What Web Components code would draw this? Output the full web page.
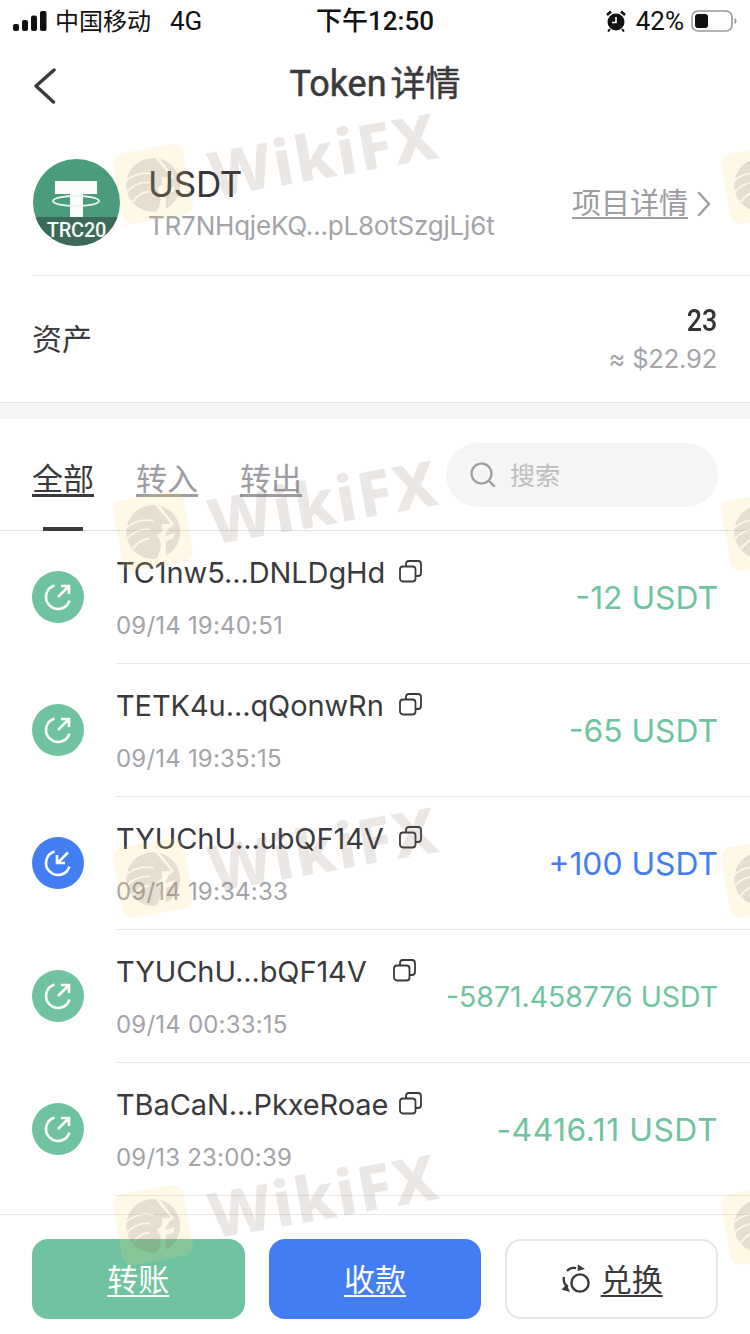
<!DOCTYPE html>
<html lang="zh"><head><meta charset="utf-8"><title>Token详情</title>
<style>html,body{margin:0;padding:0;background:#fff}body{font-family:Inter,"Noto Sans CJK SC",sans-serif}</style></head>
<body>
<app-screen>
  <status-bar></status-bar>
  <nav-bar><span>Token</span><span>详情</span></nav-bar>
  <token-head name="USDT" address="TR7NHqjeKQ...pL8otSzgjLj6t" link="项目详情"></token-head>
  <asset-row label="资产" amount="23" value="≈ $22.92"></asset-row>
  <tab-bar></tab-bar>
  <tx-list>
    <tx-row kind="out" name="TC1nw5...DNLDgHd" time="09/14 19:40:51" amount="-12 USDT"></tx-row>
    <tx-row kind="out" name="TETK4u...qQonwRn" time="09/14 19:35:15" amount="-65 USDT"></tx-row>
    <tx-row kind="in" name="TYUChU...ubQF14V" time="09/14 19:34:33" amount="+100 USDT"></tx-row>
    <tx-row kind="out" name="TYUChU...bQF14V" time="09/14 00:33:15" amount="-5871.458776 USDT" namew="264" size="28.4"></tx-row>
    <tx-row kind="out" name="TBaCaN...PkxeRoae" time="09/13 23:00:39" amount="-4416.11 USDT" spacing=".55"></tx-row>
  </tx-list>
  <action-bar></action-bar>
  <wiki-mark></wiki-mark>
</app-screen>
<script>
const CJK='"Noto Sans CJK SC"';
class Base extends HTMLElement{
  constructor(){super();this.attachShadow({mode:'open'});}
  connectedCallback(){this.shadowRoot.innerHTML=this.view();}
  a(n){return this.getAttribute(n)||'';}
}
customElements.define('app-screen',class extends Base{
  view(){return `<style>:host{display:flex;flex-direction:column;position:relative;width:750px;height:1334px;overflow:hidden;background:#fff;color:#3a3a3c;font-family:Inter,${CJK},sans-serif}</style><slot></slot>`;}
});
customElements.define('status-bar',class extends Base{
  view(){return `<style>
  :host{display:flex;align-items:center;height:42px;padding:0 13px;box-sizing:border-box;color:#111;font-family:Roboto,${CJK},sans-serif;font-size:24px}
  .sig{margin-right:8px;display:block}.car{line-height:34px;margin-top:2px}.net{margin-left:19px;font-size:26px;line-height:34px;margin-top:-1px}
  .time{position:absolute;left:316px;top:4px;font-size:26px;font-weight:500;line-height:34px}
  .r{margin-left:auto;display:flex;align-items:center}.pct{margin:0 7px 0 10px;font-size:26px}
  </style>
  <svg class="sig" width="34" height="22" viewBox="0 0 34 22"><rect x="0" y="14" width="6" height="7" rx="2" fill="#111"/><rect x="9" y="10" width="6" height="11" rx="2" fill="#111"/><rect x="18" y="5.5" width="6" height="15.5" rx="2" fill="#111"/><rect x="27" y="1" width="6.5" height="20" rx="2" fill="#111"/></svg>
  <span class="car">中国移动</span><span class="net">4G</span>
  <span class="time">下午12:50</span>
  <span class="r">
   <svg width="20" height="22" viewBox="0 0 20 22"><circle cx="10" cy="12" r="8.5" fill="#111"/><path d="M10 7v5.5H6" stroke="#fff" stroke-width="1.6" fill="none"/><path d="M1 5l4-3.5M19 5l-4-3.5" stroke="#111" stroke-width="2.6"/><path d="M4 19l-2 2.5M16 19l2 2.5" stroke="#111" stroke-width="2"/></svg>
   <span class="pct">42%</span>
   <svg width="46" height="24" viewBox="0 0 46 24"><rect x="1" y="2" width="40" height="20" rx="6" fill="none" stroke="#999" stroke-width="1.6"/><rect x="4" y="5" width="13" height="14" rx="3" fill="#111"/><path d="M43.5 9v6c1.400-.5 2-1.700 2-3s-.6-2.500-2-3z" fill="#999"/></svg>
  </span>`;}
});
customElements.define('nav-bar',class extends Base{
  view(){return `<style>
  :host{display:flex;align-items:center;justify-content:center;position:relative;height:84px;padding-bottom:8px;box-sizing:border-box;font-size:36px;font-weight:400;color:#3a3a3c;font-family:Roboto,${CJK},sans-serif;-webkit-text-stroke:.5px #3a3a3c}
  .t{display:block;white-space:nowrap}
  ::slotted(span:last-child){font-size:35px;margin-left:4px}
  svg{position:absolute;left:32px;top:26px}
  </style><svg width="26" height="36" viewBox="0 0 26 36"><path d="M22 2L4 18l17.500 16" fill="none" stroke="#3a3a3c" stroke-width="3.4" stroke-linecap="round" stroke-linejoin="round" /></svg><div class="t"><slot></slot></div>`;}
});
customElements.define('token-logo',class extends Base{
  view(){return `<style>
  :host{display:block;position:relative;width:87px;height:87px;border-radius:50%;overflow:hidden;background:#4a9c7c;flex:none}
  svg{display:block}.band{position:absolute;left:0;right:0;bottom:0;height:29px;background:#3c6a5a;display:flex;justify-content:center;color:#f4f8f6;font:500 20px/27px Roboto,sans-serif;letter-spacing:-.2px}
  </style><svg width="87" height="87" viewBox="0 0 87 87"><path d="M22 22h42v13H50v24H37V35H22z" fill="#fbfdfc"/><ellipse cx="43" cy="42" rx="23" ry="5" fill="none" stroke="#eaf5f0" stroke-width="1.800"/></svg><div class="band">TRC20</div>`;}
});
customElements.define('token-head',class extends Base{
  view(){return `<style>
  :host{display:flex;align-items:flex-start;height:150px;margin-left:32px;padding:33px 39px 0 1px;box-sizing:border-box;border-bottom:1px solid #e6e6e6}
  .txt{margin-left:28px;display:flex;flex-direction:column}
  .n{font-size:35px;line-height:48px;margin-top:1px;color:#36363a;letter-spacing:-.3px}
  .ad{font-size:26px;line-height:32px;color:#a3a3a8;margin-top:2px;letter-spacing:-.2px;white-space:nowrap}
  .lk{margin-left:auto;display:flex;align-items:center;gap:9px;margin-top:25px;color:#9c9ca1;font-size:29px;line-height:40px}
  .lk u{text-decoration-thickness:2px;text-underline-offset:3px}
  </style><token-logo></token-logo><div class="txt"><div class="n">${this.a('name')}</div><div class="ad">${this.a('address')}</div></div>
  <div class="lk"><u>${this.a('link')}</u><svg width="14" height="26" viewBox="0 0 14 26"><path d="M2 2l10 11L2 24" fill="none" stroke="#9c9ca1" stroke-width="2.4" stroke-linecap="round" stroke-linejoin="round"/></svg></div>`;}
});
customElements.define('asset-row',class extends Base{
  view(){return `<style>
  :host{display:flex;align-items:center;justify-content:space-between;height:143px;padding:0 33px 16px 32px;box-sizing:border-box;background:linear-gradient(#fff 0 126px,#e6e6e6 126px 127px,#f5f5f5 127px)}
  .l{font-size:30px;color:#3a3a3c;margin-top:-6px}.r{display:flex;flex-direction:column;align-items:flex-end}
  .a{font:500 32px/40px Roboto,sans-serif;color:#333;display:block;transform:scaleX(.84);transform-origin:right center}.v{font-size:25.5px;line-height:40px;color:#a3a3a8;letter-spacing:-.2px;margin-top:-1px}
  </style><span class="l">${this.a('label')}</span><div class="r"><span class="a">${this.a('amount')}</span><span class="v">${this.a('value')}</span></div>`;}
});
customElements.define('tab-bar',class extends Base{
  view(){return `<style>
  :host{display:flex;height:112px;padding:24px 32px 0;box-sizing:border-box;border-bottom:1px solid #e2e2e2}
  .tabs{display:flex;gap:42px;height:64px;align-items:center;margin-top:4px}
  .t{position:relative;font-size:31px;width:62px;color:#9c9ca1;text-decoration:underline;text-decoration-thickness:2.500px;text-underline-offset:4px;white-space:nowrap;line-height:40px}
  .on{color:#3a3a3c}.on::after{content:"";position:absolute;left:11px;width:40px;height:4px;background:#3a3a3c;bottom:-32px}
  .s{margin-left:auto;width:272px;height:64px;border-radius:32px;background:#f5f5f5;display:flex;align-items:center;padding-left:24px;box-sizing:border-box;gap:14px;color:#bdbdc0;font-size:25px}
  .s span{margin-top:-2px}
  </style><div class="tabs"><span class="t on">全部</span><span class="t">转入</span><span class="t">转出</span></div>
  <div class="s"><svg width="26" height="26" viewBox="0 0 26 26"><circle cx="11.500" cy="11.500" r="10" fill="none" stroke="#9c9ca1" stroke-width="2.200"/><path d="M19 19l5 5" stroke="#9c9ca1" stroke-width="2.400" stroke-linecap="round"/></svg><span>搜索</span></div>`;}
});
customElements.define('tx-list',class extends Base{
  view(){return `<style>:host{display:flex;flex-direction:column;flex:1;min-height:0;overflow:hidden}</style><slot></slot>`;}
});
customElements.define('tx-row',class extends Base{
  view(){
    const out=this.a('kind')==='out', col=out?'#6fc3a0':'#437df3', w=Number(this.a('namew')||270), size=this.a('size')||31.8, sp=this.a('spacing')||0;
    const arrow=out?'<path d="M26 26L36.500 15.500M29 15h8v8"/>':'<path d="M36 15.500L25.500 26M25 18v8h8"/>';
    return `<style>
    :host{display:block;padding-left:32px;flex:none}
    .wrap{display:flex;align-items:center;height:132px;padding-right:32px}
    .ic{width:52px;height:52px;border-radius:50%;background:${col};flex:none;display:block}
    .mid{margin-left:32px;display:flex;flex-direction:column}
    .top{display:flex;align-items:center;height:40px}
    .nm{width:${w+1}px;font-size:29px;letter-spacing:-.1px;color:#3a3a3c;white-space:nowrap;line-height:40px}
    .cp{margin-left:12px;display:block;margin-top:-2px;flex:none}
    .tm{font-size:24px;line-height:32px;color:#a3a3a8;margin-top:17px;letter-spacing:.2px;white-space:nowrap}
    .am{margin-left:auto;font-size:${size}px;letter-spacing:${sp}px;color:${col};white-space:nowrap}
    .line{height:1px;background:#e6e6e6;margin-left:84px}
    </style>
    <div class="wrap"><svg class="ic" viewBox="0 0 52 52"><g fill="none" stroke="#fff" stroke-width="2.600"><path d="M22.500 14.500A12 12 0 1 0 37.500 29.500"/>${arrow}</g></svg>
    <div class="mid"><div class="top"><span class="nm">${this.a('name')}</span><svg class="cp" width="23" height="23" viewBox="0 0 23 23"><g fill="none" stroke="#3a3a3c" stroke-width="1.800"><rect x="1" y="6.500" width="15.500" height="15" rx="3"/><path d="M7 6.500V4a3 3 0 0 1 3-3h9a3 3 0 0 1 3 3v9a3 3 0 0 1-3 3h-2.500"/></g></svg></div><div class="tm">${this.a('time')}</div></div>
    <span class="am">${this.a('amount')}</span></div><div class="line"></div>`;
  }
});
customElements.define('action-bar',class extends Base{
  view(){return `<style>
  :host{display:grid;grid-template-columns:repeat(3,1fr);gap:24px;height:120px;flex:none;padding:24px 32px 0;box-sizing:border-box;border-top:1px solid #e6e6e6;align-items:start}
  .b{height:80px;border-radius:16px;display:flex;align-items:center;justify-content:center;gap:10px;font-size:31px;box-sizing:border-box;color:#fff;padding-bottom:4px}
  .b span{text-decoration:underline;text-decoration-thickness:2px;text-underline-offset:4px}
  .g{background:#6fc3a0}.u{background:#437df3}.w{background:#fff;border:2px solid #e6e6e6;color:#3a3a3c}
  </style><div class="b g"><span>转账</span></div><div class="b u"><span>收款</span></div>
  <div class="b w"><svg width="30" height="30" viewBox="0 0 30 30" style="margin-top:4px"><g fill="none" stroke="#3a3a3c" stroke-width="2.400"><circle cx="19" cy="19" r="8.600"/><path d="M7 23C3.500 21 2 16.500 3 13M6 7C8 4.500 12 3.500 15 4.200"/></g><path d="M0.500 25.500l8.500 2.500-3.500-7.500zM17 .5l7 4.500-7.500 2z" fill="#3a3a3c"/></svg><span>兑换</span></div>`;}
});
customElements.define('wiki-mark',class extends Base{
  view(){
    let tiles='';
    for(let r=0;r<4;r++)for(let c=0;c<2;c++){
      tiles+=`<div class="tile" style="left:${117+c*608}px;top:${148+r*347}px"><svg width="72" height="72" viewBox="0 0 72 72"><rect width="72" height="72" rx="11" fill="rgba(250,212,110,.17)"/><circle cx="36" cy="37" r="27" fill="rgba(112,92,92,.17)" mask="url(#m)"/></svg>${c===0?'<span>WikiFX</span>':''}</div>`;
    }
    return `<style>
    :host{position:absolute;inset:0;display:block;pointer-events:none;overflow:hidden}
    .tile{position:absolute;display:flex;align-items:center;gap:21px;height:72px;transform:rotate(-10deg);transform-origin:36px 36px;white-space:nowrap}
    svg{flex:none;display:block}
    span{font:800 63px/72px "Noto Sans","Liberation Sans",sans-serif;color:rgba(130,105,95,.16);letter-spacing:2px}
    </style><svg width="0" height="0" style="position:absolute"><defs><mask id="m" maskUnits="userSpaceOnUse" x="0" y="0" width="72" height="72"><rect width="72" height="72" fill="#fff"/><path d="M41 8L55 32L46 31L45 38L39 41C44 49 41 56 33 66L44 64L47 48L55 47L57 42L47 43L52 36L58 33L48 14Z" fill="#000"/><g fill="none" stroke="#000" stroke-width="1.800"><path d="M9 29C18 23 28 22 38 26M9 39C17 33 26 32 33 34M13 50C19 44 25 42 31 43"/></g></mask></defs></svg>${tiles}`;
  }
});
</script>
</body></html>
